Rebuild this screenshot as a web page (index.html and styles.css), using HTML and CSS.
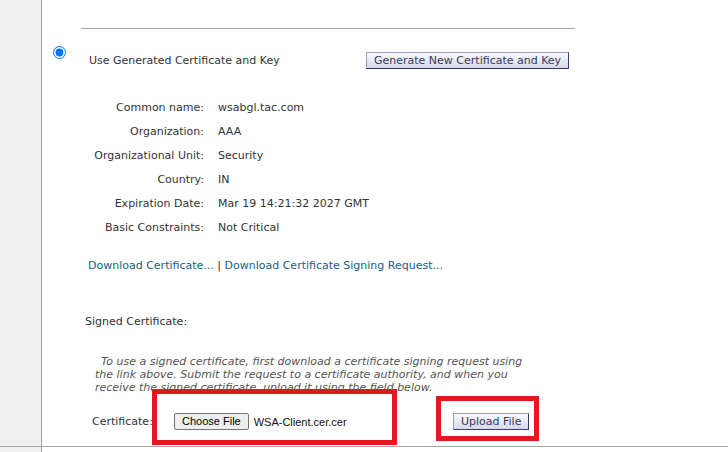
FILE: index.html
```html
<!DOCTYPE html>
<html lang="en">
<head>
    <meta charset="UTF-8">
    <title>Certificate</title>
    <link rel="stylesheet" href="styles.css">
</head>
<body>
    <div class="frame">
        <div class="side"></div>
        <div class="main">
            <div class="rule"></div>

            <div class="choice">
                <input type="radio" name="cert" class="radio" checked>
                <span class="choice-label">Use Generated Certificate and Key</span>
                <button class="btn">Generate New Certificate and Key</button>
            </div>

            <div class="details">
                <span class="key">Common name:</span><span>wsabgl.tac.com</span>
                <span class="key">Organization:</span><span>AAA</span>
                <span class="key">Organizational Unit:</span><span>Security</span>
                <span class="key">Country:</span><span>IN</span>
                <span class="key">Expiration Date:</span><span>Mar 19 14:21:32 2027 GMT</span>
                <span class="key">Basic Constraints:</span><span>Not Critical</span>
            </div>

            <div class="links">
                <a href="#">Download Certificate...</a> | <a href="#">Download Certificate Signing Request...</a>
            </div>

            <div class="signed">Signed Certificate:</div>

            <p class="hint">To use a signed certificate, first download a certificate signing request using the link above. Submit the request to a certificate authority, and when you receive the signed certificate, upload it using the field below.</p>

            <div class="upload-row">
                <span class="upload-label">Certificate:</span>
                <span class="file-cell">
                    <button class="file-btn">Choose File</button>
                    <span class="file-name">WSA-Client.cer.cer</span>
                </span>
                <button class="btn">Upload File</button>
            </div>

            <!-- annotation boxes -->
            <div class="mark mark-file"></div>
            <div class="mark mark-upload"></div>
        </div>
    </div>
    <div class="tail">
        <div class="side"></div>
    </div>
</body>
</html>
```

FILE: styles.css
```css
body { margin: 0; font-family: "DejaVu Sans", Verdana, sans-serif; font-size: 11px; color: #333; background: #fff; }
.frame { display: flex; height: 446px; border-bottom: 1px solid #a8a8a8; }
.tail { display: flex; height: 20px; }
.side { width: 41px; background: #f0f0f0; border-right: 1px solid #a0a0a0; flex-shrink: 0; }
.main { position: relative; flex: 1; }

.rule { margin: 28px 0 0 39px; width: 494px; border-top: 1px solid #a8a8a8; }

.choice { display: flex; align-items: flex-start; margin-top: 17px; }
.radio { margin: 0 0 0 11px; width: 13px; height: 13px; }
.choice-label { margin: 8px 0 0 23px; width: 277px; line-height: 14px; }

.btn { font-family: "DejaVu Sans", Verdana, sans-serif; font-size: 11px; line-height: 15px; height: 17px; padding: 0 7px; color: #3a3a55; border: 1px solid; border-color: #9c9cd0 #3b3b6b #3b3b6b #9c9cd0; background: linear-gradient(#fafaff, #d3d8ec); border-radius: 0; }
.choice .btn { margin-top: 6px; }

.details { display: grid; grid-template-columns: 116px auto; column-gap: 14px; margin: 27px 0 0 46px; line-height: 24px; }
.key { text-align: right; }

.links { margin: 19px 0 0 46px; line-height: 14px; color: #333; }
.links a { color: #22607f; text-decoration: none; }

.signed { margin: 42px 0 0 43px; line-height: 14px; }

.hint { margin: 26px 0 0 53px; width: 440px; line-height: 13px; font-style: italic; color: #555; text-indent: 6px; }

.upload-row { display: flex; align-items: center; margin: 19px 0 0 50px; height: 17px; }
.upload-label { width: 82px; }
.file-cell { display: flex; align-items: center; width: 279px; }
.file-btn { font-family: "Liberation Sans", Arial, sans-serif; font-size: 11px; line-height: 13px; height: 17px; padding: 0 7px; color: #000; background: #efefef; border: 1px solid #767676; border-radius: 2px; }
.file-name { margin-left: 5px; font-family: "Liberation Sans", Arial, sans-serif; color: #111; }

.mark { position: absolute; box-sizing: border-box; border: 5px solid #e3171d; }
.mark-file { left: 110px; top: 389px; width: 245px; height: 56px; }
.mark-upload { left: 394px; top: 396px; width: 103px; height: 45px; }
```
